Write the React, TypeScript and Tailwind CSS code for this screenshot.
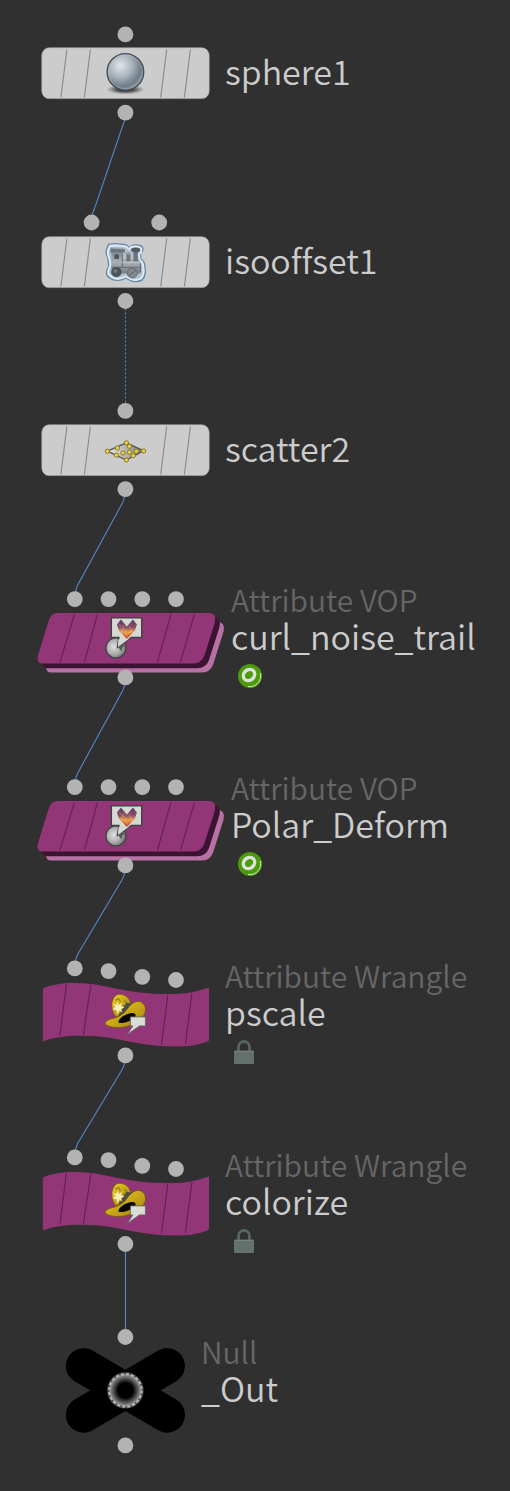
import React from "react";

type Kind = "basic" | "vop" | "wrangle" | "null";
type IconName = "sphere" | "train" | "scatter" | "vop" | "hat" | "ring";

interface NodeData {
  id: string;
  type?: string;
  kind: Kind;
  icon: IconName;
  x: number;
  y: number;
  inputs: [number, number][];
  output: number;
}

const VOP_INPUTS: [number, number][] = [[-50.6, -39.3], [-16.9, -39.3], [16.9, -39.3], [50.6, -39.3]];
const WRANGLE_INPUTS: [number, number][] = [[-50.6, -46], [-16.9, -43.3], [16.9, -37.6], [50.6, -34.4]];

const NODES: NodeData[] = [
  { id: "sphere1", kind: "basic", icon: "sphere", x: 125, y: 73, inputs: [[0, -39]], output: 39.3 },
  { id: "isooffset1", kind: "basic", icon: "train", x: 125, y: 262, inputs: [[-33.8, -39.9], [33.8, -39.9]], output: 38.6 },
  { id: "scatter2", kind: "basic", icon: "scatter", x: 125, y: 450, inputs: [[0, -39.5]], output: 38.8 },
  { id: "curl_noise_trail", type: "Attribute VOP", kind: "vop", icon: "vop", x: 125, y: 638, inputs: VOP_INPUTS, output: 39 },
  { id: "Polar_Deform", type: "Attribute VOP", kind: "vop", icon: "vop", x: 125, y: 826, inputs: VOP_INPUTS, output: 39 },
  { id: "pscale", type: "Attribute Wrangle", kind: "wrangle", icon: "hat", x: 125, y: 1014, inputs: WRANGLE_INPUTS, output: 41 },
  { id: "colorize", type: "Attribute Wrangle", kind: "wrangle", icon: "hat", x: 125, y: 1203, inputs: WRANGLE_INPUTS, output: 40.6 },
  { id: "_Out", type: "Null", kind: "null", icon: "ring", x: 125, y: 1390, inputs: [[0, -53.4]], output: 55 },
];

const CANVAS_HEIGHT = 1491;

const SLAB =
  "M-68 -25.400H83Q91.500 -25.400 89.500 -16L79 17Q76 25.200 67 25.200H-82Q-89.500 25.200 -87.500 17L-77 -17Q-74.500 -25.400 -68 -25.400Z";

const TRAIN_OUTLINE =
  "M-17 -18L-10 -18.700L0 -17.700Q2 -17 4 -14.500Q6 -17.500 10 -17.500Q17 -17.500 17.500 -14Q18 -11 15 -9L15.500 -3Q19 -1 19.500 3L20 10Q19.500 15 17 17.500Q12 20.500 6 18.500L0 15.500Q-5 19 -12 17.500Q-18.500 15 -19 11Q-18.500 6 -16.500 4L-17.500 -4Q-20 -9 -19 -13Z";

function Shape({ kind }: { kind: Kind }) {
  if (kind === "basic") {
    return (
      <g>
        <rect x="-83.600" y="-25.600" width="167.400" height="50.800" rx="7.500" fill="#cccccc" stroke="#b0b0b0" strokeWidth="0.600" />
        <path
          d="M-58.500 -24L-64.500 24M-35 -24L-41 24M41.300 -24L35.300 24M65 -24L59 24"
          stroke="#8a8a8a"
          strokeWidth="1.100"
        />
      </g>
    );
  }
  if (kind === "vop") {
    return (
      <g>
        <path d={SLAB} transform="translate(8.700 9)" fill="#b871a4" />
        <path d={SLAB} transform="translate(4.600 4.600)" fill="#3b1431" />
        <path d={SLAB} fill="#923678" />
        <path d="M-51 -24L-65.500 24M-28 -24L-41 24M45.500 -24L32 24M69 -24L55 24" stroke="#65204f" strokeWidth="1.100" />
      </g>
    );
  }
  if (kind === "wrangle") {
    return (
      <g>
        <path d="M-82.500 -26C-69 -32.500 -42 -33.500 -15 -27C10 -21.500 35 -19 58 -21C68 -22 76 -24.500 83.700 -27V26C74 31 62 32 50 32C24 32 4 27 -15 23.500C-40 19.500 -69 21 -82.500 27Z" fill="#923678" />
        <path d="M-59 -30L-65.500 21M-34.500 -30L-42 20.500M42.500 -20L36 30.500M66.500 -21.500L60 30" stroke="#65204f" strokeWidth="1.100" />
      </g>
    );
  }
  return <path d="M-41.800 -24.500L41.800 24.500M41.800 -24.500L-41.800 24.500" stroke="#000" strokeWidth="35.500" strokeLinecap="round" />;
}

function Icon({ name, id }: { name: IconName; id: string }) {
  const g = `${id}-fill`;
  if (name === "sphere") {
    return (
      <g>
        <defs>
          <radialGradient id={g} cx="0.36" cy="0.33" r="0.72">
            <stop offset="0" stopColor="#e2e6e9" />
            <stop offset="0.45" stopColor="#a9b3ba" />
            <stop offset="0.8" stopColor="#6f7c86" />
            <stop offset="1" stopColor="#8d9ba6" />
          </radialGradient>
          <radialGradient id={`${id}-shade`}>
            <stop offset="0.4" stopColor="#444" />
            <stop offset="1" stopColor="#555" stopOpacity="0" />
          </radialGradient>
        </defs>
        <ellipse cx="0" cy="16" rx="19" ry="5" fill={`url(#${id}-shade)`} />
        <circle cx="0" cy="-1.500" r="18.300" fill={`url(#${g})`} stroke="#454e59" strokeWidth="1.400" />
        <circle cx="0" cy="-1.500" r="16.900" fill="none" stroke="#a9bccb" strokeOpacity="0.550" strokeWidth="0.900" />
      </g>
    );
  }
  if (name === "train") {
    return (
      <g>
        <defs>
          <linearGradient id={g} x1="0" y1="0" x2="0" y2="1">
            <stop offset="0" stopColor="#83898f" />
            <stop offset="0.5" stopColor="#a9afb4" />
            <stop offset="1" stopColor="#777e85" />
          </linearGradient>
        </defs>
        <path d={TRAIN_OUTLINE} fill="#b3c0cc" stroke="#6685a5" strokeWidth="1.300" strokeLinejoin="round" />
        <path d={TRAIN_OUTLINE} transform="scale(.91)" fill="none" stroke="#dcecfa" strokeWidth="2" />
        <path d="M-14 -11H-3V-3H14L15 3V11H-14Z" fill={`url(#${g})`} />
        <path d="M-15 -14.500L-1 -13.500L0 -10H-15Z" fill="#6c747c" />
        <path d="M-15 -14.500L-1 -13.500" stroke="#a4abb1" />
        <rect x="-11" y="-8" width="4.500" height="4.500" fill="#4b5259" />
        <path d="M-3 -9V5M-14 5H14" stroke="#666e76" strokeWidth="1" />
        <path d="M1 -8H5V-1H1ZM8 -12H12.500V-1H8Z" fill="#6c747c" />
        <ellipse cx="3" cy="-8.500" rx="2.500" ry="1.300" fill="#8d949b" />
        <ellipse cx="10.300" cy="-12.500" rx="4.500" ry="2.400" fill="#515961" />
        <path d="M-3 0H14" stroke="#bcc1c5" strokeWidth="1.500" />
        <circle cx="-9" cy="9.500" r="5.200" fill="#4b535a" />
        <circle cx="-10" cy="8.500" r="2" fill="#6f777e" />
        <circle cx="7" cy="10.500" r="5" fill="#838a90" stroke="#656d74" />
        <path d="M3 13.500L11 7.500M15 1V10" stroke="#596169" strokeWidth="1" />
      </g>
    );
  }
  if (name === "scatter") {
    const points = [[-18, 0.8], [1, -7.6], [18.2, 0.5], [1, 9.6], [-8, -2.4], [4, -4], [-9, 4.8], [-2.5, 2.6], [4, 1.8], [11, 0.8], [7.8, 5.3]];
    return (
      <g>
        <defs>
          <linearGradient id={g}>
            <stop offset="0" stopColor="#e5e6e2" />
            <stop offset="0.5" stopColor="#b5b7ac" />
            <stop offset="1" stopColor="#77796c" />
          </linearGradient>
        </defs>
        <path d="M-18 .8L1 -7.600L18.200 .5L1 9.600Z" fill={`url(#${g})`} stroke="#565a54" strokeWidth="1.300" />
        {points.map(([x, y]) => (
          <circle key={`${x},${y}`} cx={x} cy={y} r="2.100" fill="#ead24b" stroke="#8f7a28" strokeWidth="1" />
        ))}
      </g>
    );
  }
  if (name === "vop") {
    return (
      <g>
        <defs>
          <radialGradient id={g} cx="0.4" cy="0.45" r="0.6">
            <stop offset="0" stopColor="#e0e0e0" />
            <stop offset="0.6" stopColor="#adadad" />
            <stop offset="1" stopColor="#777" />
          </radialGradient>
          <linearGradient id={`${id}-heart`} x1="0" y1="0" x2="0" y2="1">
            <stop offset="0" stopColor="#5c3a68" />
            <stop offset="0.42" stopColor="#8d5166" />
            <stop offset="0.65" stopColor="#eba044" />
            <stop offset="1" stopColor="#b42c1c" />
          </linearGradient>
        </defs>
        <circle cx="-9.500" cy="9.500" r="10" fill={`url(#${g})`} stroke="#414644" strokeWidth="1.300" />
        <path d="M-14 -20.500H16.300V-1H6L-8 9L-6.500 -1H-14Z" fill="#d6d8d4" stroke="#3d403b" strokeWidth="1.300" />
        <path d="M-8.500 -14L-4.500 -19L1.500 -12L7.500 -19L11.500 -14L9.500 -8L1.500 .5L-6.500 -8Z" fill={`url(#${id}-heart)`} />
        <path d="M-6 -14L0 -8L2 -1M-5 -9L1 -3L8 -9M-1 -13L-4 -7M4 -12L6 -7" fill="none" stroke="#f1cf96" strokeOpacity="0.500" strokeWidth="0.700" />
        <path d="M-6 6L-7 9L-4 13L-3 9L1 6Z" fill="#565a58" />
        <path d="M-7 1L-7.500 8.500L4 0" fill="#d6d8d4" />
      </g>
    );
  }
  if (name === "hat") {
    return (
      <g>
        <defs>
          <linearGradient id={g} x1="0" y1="0" x2="1" y2="1">
            <stop offset="0" stopColor="#ecd21f" />
            <stop offset="1" stopColor="#a57c10" />
          </linearGradient>
        </defs>
        <path d="M-10 2C-16 -7 -14 -17 -8 -20C0 -21 5 -16 5 -10L1 2Z" fill={`url(#${g})`} stroke="#66540e" strokeWidth="0.700" />
        <path d="M-7 1L1 -12L8 -10L0 6L-8 6Z" fill="#474d45" />
        <path d="M-20 8C-17 3 -9 6 0 -3C5 -10 8 -13 14 -13C21 -11 22 -3 17 3C10 11 -4 15 -14 12.500C-18 11.500 -21 10 -20 8Z" fill={`url(#${g})`} stroke="#6b570d" strokeWidth="0.800" />
        <path d="M-7 8C-7 4 -1 0 4 -1C8 -2 11 -1 10 2C8 6 -3 10 -7 8Z" fill="#080805" />
        <path d="M-8 -13L-6.500 -9.500L-3 -12L-4.500 -8.500L-1 -7L-4.500 -5.500L-3 -2L-6 -4L-8 0L-9 -4.500L-13 -5L-10 -7.500L-12.500 -11L-9 -9.500Z" fill="#f4edba" />
        <path d="M-10 -14L-7 -16L-5 -13M-1 -14L2 -11M-2 -9L1 -8" fill="none" stroke="#68603c" strokeWidth="1" />
        <path d="M5 2.500H20V11.500H14L2 20L7.500 11.500H5Z" fill="#dcdcd7" stroke="#686861" strokeWidth="0.900" />
      </g>
    );
  }
  return (
    <g>
      <defs>
        <radialGradient id={g}>
          <stop offset="0.450" stopColor="#000" />
          <stop offset="0.750" stopColor="#5c5c5c" />
          <stop offset="1" stopColor="#b0b0b0" />
        </radialGradient>
      </defs>
      <circle r="16.800" fill={`url(#${g})`} />
      <circle r="17" fill="none" stroke="#4b4b4b" strokeWidth="2.400" />
      <circle r="16.300" fill="none" stroke="#b5b5b5" strokeWidth="2" strokeDasharray="3.200 1.921" />
    </g>
  );
}

function CompiledBadge() {
  return (
    <svg viewBox="0 0 24 24" className="ml-[7px] size-6" aria-hidden="true">
      <circle cx="12" cy="12" r="12" fill="#4c9b0d" />
      <path d="M22.300 9A10.800 10.800 0 0 1 10 22.500" fill="none" stroke="#cfe8bb" strokeWidth="1" />
      <ellipse cx="11" cy="11" rx="6" ry="5.200" fill="none" stroke="#dde3da" strokeWidth="3.400" transform="rotate(-42 11 11)" />
    </svg>
  );
}

function LockBadge() {
  return (
    <svg viewBox="0 0 20 24" className="ml-[9px] h-6 w-5" aria-hidden="true">
      <path d="M4.500 12V7a5.500 5.500 0 0 1 11 0V12" fill="none" stroke="#586662" strokeWidth="2.800" />
      <rect y="10.500" width="20" height="13.500" rx="1.200" fill="#63716e" />
      <path d="M1 11.500H19" stroke="#73817d" />
    </svg>
  );
}

const SHAPE_WIDTH: Record<Kind, string> = {
  basic: "w-[195px]",
  vop: "w-[201px]",
  wrangle: "w-[195px]",
  null: "w-[171px]",
};

function NetworkNode({ node }: { node: NodeData }) {
  return (
    <article className="absolute flex h-32 items-center" style={{ left: node.x - 95, top: node.y - 64 }}>
      <svg
        viewBox="-95 -64 201 128"
        preserveAspectRatio="xMinYMin slice"
        className={`h-32 shrink-0 ${SHAPE_WIDTH[node.kind]}`}
        aria-hidden="true"
      >
        <g transform="translate(.4 .4)">
          <Shape kind={node.kind} />
          <Icon name={node.icon} id={node.id} />
          {node.inputs.map(([x, y]) => (
            <circle key={x} cx={x} cy={y} r="7.900" fill="#b3b3b3" />
          ))}
          <circle cx="0" cy={node.output} r="7.900" fill="#b3b3b3" />
        </g>
      </svg>
      <div className="grid grid-rows-[37px_36px_44px] items-center pt-[3px] whitespace-nowrap">
        <p className="text-[30px] leading-[37px] font-[350] text-[#666666]">{node.type}</p>
        <h2 className="text-[34px] leading-[36px] font-[350] text-[#cccccc]">{node.id}</h2>
        <div>
          {node.kind === "vop" && <CompiledBadge />}
          {node.kind === "wrangle" && <LockBadge />}
        </div>
      </div>
    </article>
  );
}

function Wires() {
  return (
    <svg className="absolute inset-0 size-full" fill="none" stroke="#5389c6" strokeWidth="1.100" aria-hidden="true">
      {NODES.slice(1).map((to, i) => {
        const from = NODES[i];
        const x1 = from.x + 0.5;
        const y1 = from.y + from.output;
        const x2 = to.x + to.inputs[0][0] + 0.5;
        const y2 = to.y + to.inputs[0][1];
        const d = x1 === x2 ? `M${x1} ${y1}V${y2}` : `M${x1} ${y1}Q${x1} ${y1 + 8} ${x1 - 3} ${y1 + 14}L${x2 + 3} ${y2 - 14}Q${x2} ${y2 - 8} ${x2} ${y2}`;
        return <path key={to.id} d={d} strokeDasharray={to.id === "scatter2" ? "2 2" : undefined} />;
      })}
    </svg>
  );
}

export default function App() {
  return (
    <main
      className="relative min-h-screen w-full overflow-hidden bg-[#303030] font-['Noto_Sans_CJK_JP','Noto_Sans',sans-serif] [font-variant-ligatures:none]"
      style={{ minHeight: CANVAS_HEIGHT }}
    >
      <Wires />
      {NODES.map((node) => (
        <NetworkNode key={node.id} node={node} />
      ))}
    </main>
  );
}
